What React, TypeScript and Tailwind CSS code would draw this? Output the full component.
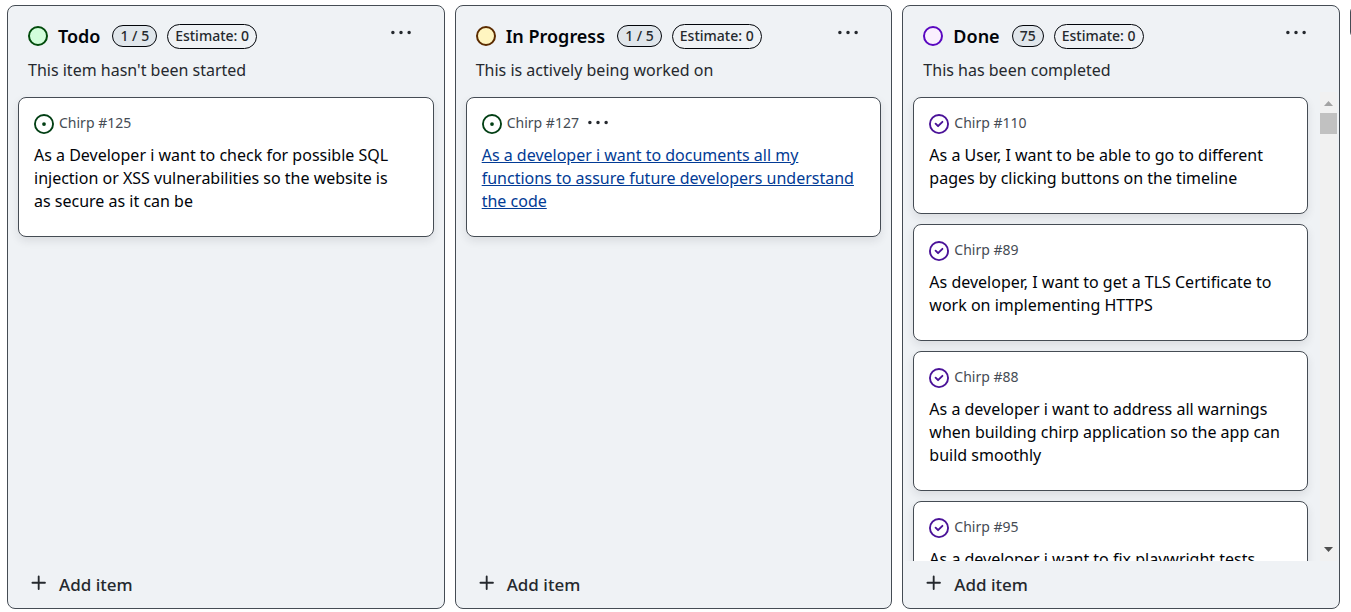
import React from "react";

type Tone = "green" | "yellow" | "purple";

interface Item {
  id: number;
  title: string;
  active?: boolean;
}

interface BoardColumn {
  name: string;
  tone: Tone;
  count: string;
  description: string;
  items: Item[];
  scrolls?: boolean;
}

const columns: BoardColumn[] = [
  {
    name: "Todo",
    tone: "green",
    count: "1 / 5",
    description: "This item hasn't been started",
    items: [
      {
        id: 125,
        title:
          "As a Developer i want to check for possible SQL injection or XSS vulnerabilities so the website is\nas secure as it can be",
      },
    ],
  },
  {
    name: "In Progress",
    tone: "yellow",
    count: "1 / 5",
    description: "This is actively being worked on",
    items: [
      {
        id: 127,
        active: true,
        title:
          "As a developer i want to documents all my functions to assure future developers understand the code",
      },
    ],
  },
  {
    name: "Done",
    tone: "purple",
    count: "75",
    description: "This has been completed",
    scrolls: true,
    items: [
      { id: 110, title: "As a User, I want to be able to go to different pages by clicking buttons on the timeline" },
      { id: 89, title: "As developer, I want to get a TLS Certificate to work on implementing HTTPS" },
      {
        id: 88,
        title:
          "As a developer i want to address all warnings when building chirp application so the app can build smoothly",
      },
      { id: 95, title: "As a developer i want to fix playwright tests" },
    ],
  },
];

const dotTones: Record<Tone, string> = {
  green: "border-[#024c0c] bg-[#d2fedb]",
  yellow: "border-[#5c2c00] bg-[#fff5c0]",
  purple: "border-[#5a08c0] bg-[#faf0fe]",
};

function KebabIcon() {
  return (
    <svg viewBox="0 0 16 16" className="size-5" fill="currentColor" aria-hidden="true">
      <path d="M8 8.900a1.400 1.400 0 1 0 0-2.800 1.400 1.400 0 0 0 0 2.800ZM1.500 8.900a1.400 1.400 0 1 0 0-2.800 1.400 1.400 0 0 0 0 2.800Zm13 0a1.400 1.400 0 1 0 0-2.800 1.400 1.400 0 0 0 0 2.800Z" />
    </svg>
  );
}

function OpenIcon() {
  return (
    <svg viewBox="0 0 16 16" className="size-5 text-[#023f14]" fill="currentColor" aria-hidden="true">
      <path d="M8 9.500a1.500 1.500 0 1 0 0-3 1.500 1.500 0 0 0 0 3Z" />
      <path d="M8 0a8 8 0 1 1 0 16A8 8 0 0 1 8 0ZM1.500 8a6.500 6.500 0 1 0 13 0 6.500 6.500 0 0 0-13 0Z" />
    </svg>
  );
}

function ClosedIcon() {
  return (
    <svg viewBox="0 0 16 16" className="size-5 text-[#4a1298]" fill="currentColor" aria-hidden="true">
      <path d="M11.28 6.78a.75.75 0 0 0-1.06-1.06L7.25 8.69 5.78 7.22a.75.75 0 0 0-1.06 1.06l2 2a.75.75 0 0 0 1.06 0l3.5-3.5Z" />
      <path d="M16 8A8 8 0 1 1 0 8a8 8 0 0 1 16 0Zm-1.5 0a6.5 6.5 0 1 0-13 0 6.5 6.5 0 0 0 13 0Z" />
    </svg>
  );
}

function PlusIcon() {
  return (
    <svg viewBox="0 0 16 16" className="size-5" fill="currentColor" aria-hidden="true">
      <path d="M7.75 2a.75.75 0 0 1 .75.75V7h4.25a.75.75 0 0 1 0 1.5H8.5v4.25a.75.75 0 0 1-1.5 0V8.5H2.75a.75.75 0 0 1 0-1.5H7V2.75A.75.75 0 0 1 7.75 2Z" />
    </svg>
  );
}

function Card({ item, closed }: { item: Item; closed: boolean }) {
  return (
    <li className="shrink-0 rounded-lg border border-[#454c54] bg-white px-[15px] pt-4 pb-[23px] shadow-[0_4px_8px_rgba(37,41,46,0.1)]">
      <div className="flex h-5 items-center gap-[5px] text-[#454c54]">
        {closed ? <ClosedIcon /> : <OpenIcon />}
        <span className="pb-0.5 text-sm">Chirp #{item.id}</span>
        {item.active && (
          <button type="button" aria-label="Item options" className="mb-0.5 ml-1 text-[#25292e]">
            <KebabIcon />
          </button>
        )}
      </div>
      <h3 className="mt-[10px] text-base leading-[23px] whitespace-pre-line">
        <a href={`#item-${item.id}`} className={item.active ? "text-[#023b95] underline" : "text-[#010409]"}>
          {item.title}
        </a>
      </h3>
    </li>
  );
}

function ScrollTrack() {
  return (
    <div className="mr-0.5 flex w-[17px] shrink-0 flex-col items-center bg-[#f1f1f1]" aria-hidden="true">
      <svg viewBox="0 0 17 21" className="h-[21px] w-[17px]" fill="#a3a3a3">
        <path d="M4 14h9L8.500 9Z" />
      </svg>
      <div className="h-[21px] w-full bg-[#c1c1c1]" />
      <svg viewBox="0 0 17 17" className="mt-auto mb-1 h-[17px] w-[17px]" fill="#505050">
        <path d="M4 7h9L8.500 12Z" />
      </svg>
    </div>
  );
}

function Column({ column }: { column: BoardColumn }) {
  return (
    <section className="flex min-w-0 flex-1 flex-col overflow-hidden rounded-lg border border-[#454c54] bg-[#eff2f5]">
      <header className="px-5 pt-[17px]">
        <div className="flex h-[26px] items-center">
          <span className={`size-5 shrink-0 rounded-full border-2 ${dotTones[column.tone]}`} />
          <h2 className="ml-[10px] text-lg font-semibold text-[#010409]">{column.name}</h2>
          <span className="ml-3 flex h-[22px] items-center rounded-full border border-[#010409] bg-[#e0e6eb] px-[7px] text-sm font-medium text-[#25292e]">
            {column.count}
          </span>
          <span className="ml-[10px] flex h-[25px] items-center rounded-full border border-[#010409] px-[7px] text-sm font-medium text-[#25292e]">
            Estimate: 0
          </span>
          <button type="button" aria-label={`${column.name} options`} className="mr-[13px] mb-1.5 ml-auto text-[#25292e]">
            <KebabIcon />
          </button>
        </div>
        <p className="mt-[9px] text-base leading-6 text-[#25292e]">{column.description}</p>
      </header>
      <div className="mt-[10px] flex min-h-0 flex-1">
        <ul
          className={`flex min-w-0 flex-1 flex-col gap-[10px] overflow-hidden pt-[5px] pl-[10px] ${
            column.scrolls ? "pr-3" : "pr-[10px]"
          }`}
        >
          {column.items.map((item) => (
            <Card key={item.id} item={item} closed={column.tone === "purple"} />
          ))}
        </ul>
        {column.scrolls && <ScrollTrack />}
      </div>
      <button type="button" className="flex h-[47px] shrink-0 items-center gap-[10px] px-[21px] text-[17px] font-medium text-[#25292e]">
        <span className="pb-[3px]">
          <PlusIcon />
        </span>
        Add item
      </button>
    </section>
  );
}

export default function App() {
  return (
    <main className="flex h-screen gap-[10px] overflow-hidden bg-white pt-[5px] pb-[3px] pl-[7px] font-['Noto_Sans','Open_Sans',sans-serif]">
      {columns.map((column) => (
        <Column key={column.name} column={column} />
      ))}
      <div className="w-px shrink-0 overflow-hidden">
        <button type="button" aria-label="Add column" className="mt-px h-8 w-8 rounded-md border border-[#454c54] bg-[#eff2f5]" />
      </div>
    </main>
  );
}
